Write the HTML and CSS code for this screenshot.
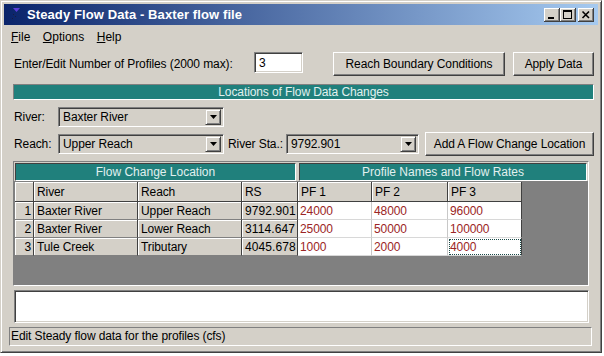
FILE: index.html
```html
<!DOCTYPE html>
<html>
<head>
  <title>Steady Flow Data - Baxter flow file</title>
  <link rel="stylesheet" href="styles.css">
</head>
<body>
<div class="window">
  <div class="titlebar">
    <svg class="app-icon" width="10" height="12" viewBox="0 0 10 12">
      <polygon points="2,0 9,0 5.5,4" fill="#5b3fd8"/>
      <rect x="2" y="6" width="1" height="1" fill="#1a1a40"/>
      <rect x="4" y="8" width="1" height="1" fill="#1a1a40"/>
      <rect x="1" y="10" width="1" height="1" fill="#1a1a40"/>
    </svg>
    <span class="title">Steady Flow Data - Baxter flow file</span>
    <div class="caption-btns">
      <span class="cap-btn">
        <svg width="16" height="14" viewBox="0 0 16 14"><rect x="4" y="9" width="6" height="2" fill="#000"/></svg>
      </span>
      <span class="cap-btn">
        <svg width="16" height="14" viewBox="0 0 16 14"><path d="M3 2h9v9h-9z M4 4v6h7v-6z" fill="#000" fill-rule="evenodd"/></svg>
      </span>
      <span class="cap-btn close">
        <svg width="16" height="14" viewBox="0 0 16 14"><path d="M4.5 3.5l6.5 6.5M11 3.5l-6.5 6.5" stroke="#000" stroke-width="1.6"/></svg>
      </span>
    </div>
  </div>

  <div class="menubar">
    <span class="menu-item"><u>F</u>ile</span>
    <span class="menu-item"><u>O</u>ptions</span>
    <span class="menu-item"><u>H</u>elp</span>
  </div>

  <div class="content">
    <div class="row profiles-row">
      <span class="profiles-label">Enter/Edit Number of Profiles (2000 max):</span>
      <span class="textbox">3</span>
      <span class="button btn-boundary">Reach Boundary Conditions</span>
      <span class="button btn-apply">Apply Data</span>
    </div>

    <div class="section-head">Locations of Flow Data Changes</div>

    <div class="row river-row">
      <span class="field-label">River:</span>
      <span class="combo combo-wide">
        <span class="combo-text">Baxter River</span>
        <span class="combo-arrow"><svg width="7" height="4" viewBox="0 0 7 4"><polygon points="0,0 7,0 3.5,4" fill="#000"/></svg></span>
      </span>
    </div>

    <div class="row reach-row">
      <span class="field-label">Reach:</span>
      <span class="combo combo-wide">
        <span class="combo-text">Upper Reach</span>
        <span class="combo-arrow"><svg width="7" height="4" viewBox="0 0 7 4"><polygon points="0,0 7,0 3.5,4" fill="#000"/></svg></span>
      </span>
      <span class="sta-label">River Sta.:</span>
      <span class="combo combo-sta">
        <span class="combo-text">9792.901</span>
        <span class="combo-arrow"><svg width="7" height="4" viewBox="0 0 7 4"><polygon points="0,0 7,0 3.5,4" fill="#000"/></svg></span>
      </span>
      <span class="button btn-add">Add A Flow Change Location</span>
    </div>

    <div class="grid-frame">
      <div class="group-heads">
        <div class="group-head head-loc">Flow Change Location</div>
        <div class="group-head head-pf">Profile Names and Flow Rates</div>
      </div>
      <div class="grid-area">
        <table class="grid">
          <colgroup>
            <col class="c-num"><col class="c-river"><col class="c-reach"><col class="c-rs">
            <col class="c-pf1"><col class="c-pf2"><col class="c-pf3">
          </colgroup>
          <tr class="head">
            <th class="num"></th><th>River</th><th>Reach</th><th>RS</th>
            <th>PF 1</th><th>PF 2</th><th class="last">PF 3</th>
          </tr>
          <tr>
            <td class="num">1</td><td>Baxter River</td><td>Upper Reach</td><td class="rs">9792.901</td>
            <td class="val">24000</td><td class="val">48000</td><td class="val last">96000</td>
          </tr>
          <tr>
            <td class="num">2</td><td>Baxter River</td><td>Lower Reach</td><td class="rs">3114.647</td>
            <td class="val">25000</td><td class="val">50000</td><td class="val last">100000</td>
          </tr>
          <tr>
            <td class="num">3</td><td>Tule Creek</td><td>Tributary</td><td class="rs">4045.678</td>
            <td class="val">1000</td><td class="val">2000</td><td class="val last focus">4000</td>
          </tr>
        </table>
      </div>
    </div>

    <div class="notes"></div>
  </div>

  <div class="statusbar">Edit Steady flow data for the profiles (cfs)</div>
</div>
</body>
</html>
```

FILE: styles.css
```css
body {
  margin: 0;
  background: #ffffff;
  font-family: "Liberation Sans", Arial, sans-serif;
  font-size: 12px;
  color: #000;
}

.window {
  width: 602px;
  height: 353px;
  box-sizing: border-box;
  border: 1px solid;
  border-color: #d4d0c8 #404040 #404040 #d4d0c8;
  box-shadow: inset 1px 1px #fff, inset -1px -1px #808080;
  padding: 3px;
  background: #d4d0c8;
  display: flex;
  flex-direction: column;
}

/* title bar */
.titlebar {
  height: 21px;
  flex-shrink: 0;
  display: flex;
  align-items: center;
  padding: 0 4px 0 7px;
  background: linear-gradient(to right, #0a246a, #a6caf0);
  color: #fff;
}
.app-icon {
  margin-right: 6px;
  margin-top: -2px;
}
.title {
  font-weight: bold;
  font-size: 13px;
  letter-spacing: 0.1px;
}
.caption-btns {
  margin-left: auto;
  display: flex;
}
.cap-btn {
  width: 16px;
  height: 14px;
  background: #d4d0c8;
  box-shadow: inset -1px -1px #404040, inset 1px 1px #fff, inset -2px -2px #808080;
}
.cap-btn svg {
  display: block;
}
.cap-btn.close {
  margin-left: 2px;
}

/* menu */
.menubar {
  height: 23px;
  flex-shrink: 0;
  display: flex;
  align-items: center;
  padding-left: 7px;
}
.menu-item {
  margin-right: 12.5px;
}

/* main area */
.content {
  padding-left: 9px;
}
.row {
  display: flex;
  align-items: center;
  letter-spacing: -0.1px;
}
.profiles-row {
  margin-top: 4px;
  height: 24px;
}
.profiles-label {
  width: 240px;
  padding-left: 1px;
}
.textbox {
  width: 49px;
  height: 21px;
  box-sizing: border-box;
  background: #fff;
  border: 1px solid;
  border-color: #808080 #fff #fff #808080;
  box-shadow: inset 1px 1px #404040, inset -1px -1px #d4d0c8;
  padding: 3px 0 0 4px;
  margin-top: -3px;
}

.button {
  height: 24px;
  box-sizing: border-box;
  display: flex;
  align-items: center;
  justify-content: center;
  background: #d4d0c8;
  border: 1px solid;
  border-color: #fff #404040 #404040 #fff;
  box-shadow: inset -1px -1px #808080;
}
.btn-boundary {
  width: 172px;
  margin-left: 30px;
}
.btn-apply {
  width: 81px;
  margin-left: 8px;
}

.section-head {
  margin-top: 8px;
  width: 581px;
  height: 16px;
  box-sizing: border-box;
  background: #20807c;
  border: 1px solid;
  border-color: #808080 #fff #fff #808080;
  color: #e2f0ef;
  text-align: center;
  line-height: 14px;
  letter-spacing: -0.1px;
}

.river-row {
  margin-top: 7px;
  height: 20px;
}
.reach-row {
  margin-top: 5px;
  height: 24px;
}
.field-label {
  width: 44px;
  padding-left: 1px;
}
.combo {
  height: 20px;
  box-sizing: border-box;
  display: flex;
  align-items: center;
  border: 1px solid;
  border-color: #808080 #fff #fff #808080;
  box-shadow: inset 1px 1px #404040, inset -1px -1px #d4d0c8;
  padding: 2px;
}
.combo-wide {
  width: 166px;
}
.combo-sta {
  width: 133px;
}
.combo-text {
  flex: 1;
  padding-left: 2px;
}
.combo-arrow {
  width: 16px;
  height: 16px;
  box-sizing: border-box;
  display: flex;
  align-items: center;
  justify-content: center;
  background: #d4d0c8;
  border: 1px solid;
  border-color: #d4d0c8 #404040 #404040 #d4d0c8;
  box-shadow: inset 1px 1px #fff, inset -1px -1px #808080;
}
.sta-label {
  width: 59px;
  margin-left: 3px;
  padding-left: 1px;
  box-sizing: border-box;
}
.btn-add {
  width: 169px;
  margin-left: 6px;
}

/* grid */
.grid-frame {
  margin-top: 5px;
  width: 576px;
  box-sizing: border-box;
  border: 1px solid;
  border-color: #808080 #fff #fff #808080;
}
.group-heads {
  display: flex;
  padding: 1px 1px 0 1px;
}
.group-head {
  height: 18px;
  box-sizing: border-box;
  background: #20807c;
  color: #e2f0ef;
  text-align: center;
  line-height: 16px;
  border: 1px solid;
  border-color: #404040 #fff #fff #404040;
}
.head-loc {
  width: 281px;
}
.head-pf {
  width: 288px;
  margin-left: 3px;
}
.grid-area {
  background: #808080;
  height: 104px;
  padding: 1px;
  box-sizing: border-box;
}
.grid {
  table-layout: fixed;
  border-collapse: separate;
  border-spacing: 0;
  width: 507px;
}
.c-num { width: 19px; }
.c-river { width: 104px; }
.c-reach { width: 104px; }
.c-rs { width: 56px; }
.c-pf1 { width: 74px; }
.c-pf2 { width: 76px; }
.c-pf3 { width: 74px; }

.grid th,
.grid td {
  box-sizing: border-box;
  padding: 0 0 0 3px;
  font-weight: normal;
  text-align: left;
  white-space: nowrap;
  overflow: hidden;
  letter-spacing: -0.1px;
  background: #d4d0c8;
  border-right: 1px solid #404040;
  border-bottom: 1px solid #808080;
  box-shadow: inset 1px 1px #fff;
}
.grid th {
  height: 20px;
  border-bottom-color: #404040;
}
.grid td {
  height: 18px;
}
.grid td.rs {
  padding-left: 3px;
  letter-spacing: 0.1px;
}
.grid .num {
  text-align: right;
  padding: 0 2px 0 0;
}
.grid td.val {
  background: #fff;
  color: #9b2525;
  box-shadow: none;
  border-right-color: #c8c8c8;
  border-bottom-color: #d8d8d8;
  padding-left: 2px;
}
.grid td.val.last {
  border-right-color: #404040;
}
.grid td.focus {
  outline: 1px dotted #1a4a48;
  outline-offset: -2px;
}

.notes {
  margin-top: 4px;
  margin-left: 1px;
  width: 575px;
  height: 33px;
  box-sizing: border-box;
  background: #fff;
  border: 1px solid;
  border-color: #808080 #fff #fff #808080;
  box-shadow: inset 1px 1px #404040, inset -1px -1px #d4d0c8;
}

.statusbar {
  margin-top: 4px;
  margin-left: 5px;
  width: 583px;
  height: 19px;
  box-sizing: border-box;
  border: 1px solid;
  border-color: #808080 #fff #fff #808080;
  padding-left: 1px;
  line-height: 17px;
  letter-spacing: -0.1px;
}
```
